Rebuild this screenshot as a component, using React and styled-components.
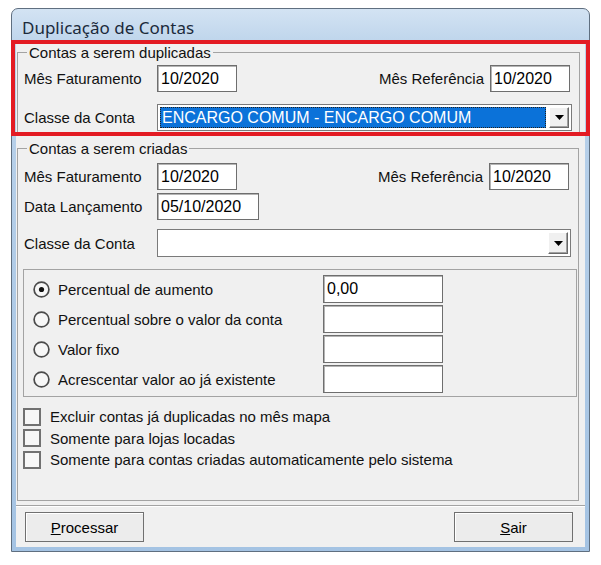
import styled, { createGlobalStyle } from "styled-components";

const GlobalStyle = createGlobalStyle`
  body {
    margin: 0;
    background: #fff;
    font-family: "Liberation Sans", Arial, sans-serif;
    font-size: 15px;
    color: #111;
  }
`;

const Window = styled.div`
  margin: 8px 0 0 11px;
  width: 579px;
  height: 544px;
  box-sizing: border-box;
  display: flex;
  flex-direction: column;
  padding: 0 4px 4px;
  border: 1px solid #5f6f80;
  border-radius: 7px 7px 0 0;
  background: linear-gradient(180deg, #d3e3f3 0%, #bad2ea 40px, #a4c3e3 100%);
`;

const TitleBar = styled.div`
  flex: none;
  height: 31px;
  box-sizing: border-box;
  padding: 7px 0 0 6px;
  font-family: "Noto Sans", sans-serif;
  font-size: 17px;
  color: #1b2a3b;
`;

const Client = styled.div`
  flex: 1;
  display: flex;
  flex-direction: column;
  background: #f0f0f0;
`;

const Highlight = styled.div`
  flex: none;
  margin: 0 -5px;
  height: 96px;
  box-sizing: border-box;
  border: 4px solid #e31b23;
  padding: 0 0 0 1px;
  overflow: hidden;
`;

const Group = styled.fieldset`
  margin: ${(p) => p.$top || 0}px 6px 0 1px;
  padding: 0 1px ${(p) => p.$bottom || 0}px 5px;
  min-width: 0;
  border: 1px solid #a3a3a3;
  flex: ${(p) => (p.$grow ? 1 : "none")};
`;

const Legend = styled.legend`
  margin-left: 4px;
  padding: 0 2px;
  line-height: 17px;
`;

const Row = styled.div`
  display: flex;
  align-items: center;
  margin-top: ${(p) => p.$top || 0}px;
  padding: 0 ${(p) => p.$right ?? 8}px 0 1px;
`;

const Label = styled.span`
  width: ${(p) => (p.$w ? `${p.$w}px` : "auto")};
  margin-left: ${(p) => (p.$push ? "auto" : 0)};
  margin-right: ${(p) => (p.$push ? "6px" : 0)};
  white-space: nowrap;
`;

const Field = styled.div`
  width: ${(p) => p.$w}px;
  height: ${(p) => p.$h || 27}px;
  box-sizing: border-box;
  display: flex;
  align-items: center;
  padding: 0 3px;
  background: #fff;
  border: 1px solid #6e6e6e;
  box-shadow: inset 1px 1px 0 #b4b4b4;
  font-size: 16px;
  color: #000;
`;

const Combo = styled.div`
  flex: 1;
  height: ${(p) => p.$h || 27}px;
  box-sizing: border-box;
  display: flex;
  gap: 3px;
  padding: 2px;
  background: #fff;
  border: 1px solid #7a7a7a;
`;

const ComboText = styled.div`
  flex: 1;
  display: flex;
  align-items: center;
  padding-left: 2px;
  font-size: 16px;
  background: ${(p) => (p.$selected ? "#0b72d9" : "transparent")};
  color: ${(p) => (p.$selected ? "#fff" : "#000")};
  outline: ${(p) => (p.$selected ? "1px dotted #222" : "none")};
  outline-offset: -1px;
`;

const DropButton = styled.div`
  width: 20px;
  display: flex;
  align-items: center;
  justify-content: center;
  box-sizing: border-box;
  background: #f0f0f0;
  border: 1px solid;
  border-color: #fff #696969 #696969 #fff;
  box-shadow: inset -1px -1px 0 #a0a0a0;
`;

const OptionBox = styled.div`
  margin-top: 12px;
  padding: 5px 0 3px;
  border: 1px solid #a3a3a3;
  display: flex;
  flex-direction: column;
  gap: 2px;
`;

const OptionRow = styled.div`
  display: grid;
  grid-template-columns: 299px 120px;
  align-items: center;
  height: 28px;
`;

const RadioLabel = styled.div`
  display: flex;
  align-items: center;
  gap: 8px;
  padding-left: 9px;
`;

const CheckList = styled.div`
  margin-top: 9px;
  display: flex;
  flex-direction: column;
`;

const CheckRow = styled.div`
  display: flex;
  align-items: center;
  gap: 9px;
  height: 21.5px;
`;

const CheckBox = styled.span`
  width: 18px;
  height: 18px;
  box-sizing: border-box;
  border: 2px solid #717171;
  background: #f7f7f7;
`;

const Panel = styled.div`
  flex: none;
  margin-top: 4px;
  height: 42px;
  box-sizing: border-box;
  display: flex;
  justify-content: space-between;
  align-items: flex-start;
  padding: 6px 12px 0 9px;
  border-top: 1px solid #a3a3a3;
  box-shadow: inset 0 1px 0 #fff;
`;

const Button = styled.button`
  width: 119px;
  height: 30px;
  padding: 0;
  border: 1px solid #707070;
  background: #ececec;
  box-shadow: inset 1px 1px 0 #fff;
  font-family: "Liberation Sans", Arial, sans-serif;
  font-size: 15px;
  color: #000;
`;

const Radio = ({ checked }) => (
  <svg width="17" height="17" viewBox="0 0 17 17">
    <circle cx="8.5" cy="8.5" r="7.4" fill="#f7f7f7" stroke="#4b4b4b" strokeWidth="1.7" />
    {checked && <circle cx="8.5" cy="8.5" r="2.6" fill="#111" />}
  </svg>
);

const Arrow = () => (
  <svg width="9" height="5" viewBox="0 0 9 5">
    <path d="M0 0h9L4.5 5z" fill="#000" />
  </svg>
);

const options = [
  { label: "Percentual de aumento", value: "0,00", checked: true },
  { label: "Percentual sobre o valor da conta", value: "" },
  { label: "Valor fixo", value: "" },
  { label: "Acrescentar valor ao já existente", value: "" },
];

const checks = [
  "Excluir contas já duplicadas no mês mapa",
  "Somente para lojas locadas",
  "Somente para contas criadas automaticamente pelo sistema",
];

export default function App() {
  return (
    <>
      <GlobalStyle />
      <Window>
        <TitleBar>Duplicação de Contas</TitleBar>
        <Client>
          <Highlight>
            <Group $bottom={8}>
              <Legend>Contas a serem duplicadas</Legend>
              <Row $top={4}>
                <Label $w={133}>Mês Faturamento</Label>
                <Field $w={80}>10/2020</Field>
                <Label $push>Mês Referência</Label>
                <Field $w={80}>10/2020</Field>
              </Row>
              <Row $top={12} $right={6}>
                <Label $w={133}>Classe da Conta</Label>
                <Combo>
                  <ComboText $selected>ENCARGO COMUM - ENCARGO COMUM</ComboText>
                  <DropButton>
                    <Arrow />
                  </DropButton>
                </Combo>
              </Row>
            </Group>
          </Highlight>

          <Group $top={4} $grow>
            <Legend>Contas a serem criadas</Legend>
            <Row $top={6}>
              <Label $w={133}>Mês Faturamento</Label>
              <Field $w={80}>10/2020</Field>
              <Label $push>Mês Referência</Label>
              <Field $w={80}>10/2020</Field>
            </Row>
            <Row $top={3}>
              <Label $w={133}>Data Lançamento</Label>
              <Field $w={102}>05/10/2020</Field>
            </Row>
            <Row $top={9} $right={6}>
              <Label $w={133}>Classe da Conta</Label>
              <Combo $h={28}>
                <ComboText />
                <DropButton>
                  <Arrow />
                </DropButton>
              </Combo>
            </Row>

            <OptionBox>
              {options.map((o) => (
                <OptionRow key={o.label}>
                  <RadioLabel>
                    <Radio checked={o.checked} />
                    <span>{o.label}</span>
                  </RadioLabel>
                  <Field $w={120} $h={28}>
                    {o.value}
                  </Field>
                </OptionRow>
              ))}
            </OptionBox>

            <CheckList>
              {checks.map((c) => (
                <CheckRow key={c}>
                  <CheckBox />
                  <span>{c}</span>
                </CheckRow>
              ))}
            </CheckList>
          </Group>

          <Panel>
            <Button>
              <u>P</u>rocessar
            </Button>
            <Button>
              <u>S</u>air
            </Button>
          </Panel>
        </Client>
      </Window>
    </>
  );
}
